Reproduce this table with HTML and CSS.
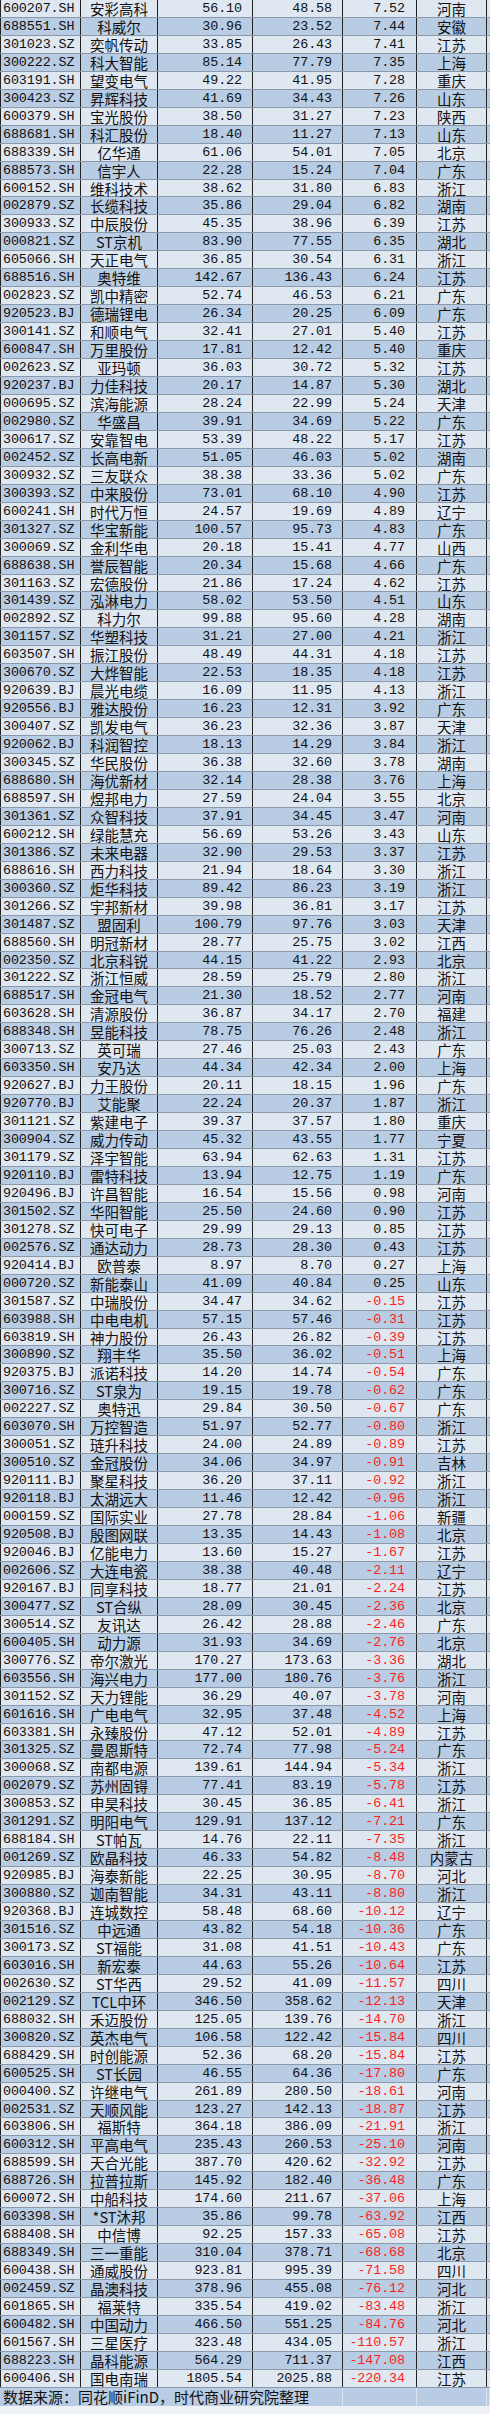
FILE: index.html
```html
<!DOCTYPE html>
<html lang="zh-CN">
<head>
<meta charset="utf-8">
<title>电力设备市值变化</title>
<link rel="stylesheet" href="styles.css">
</head>
<body>
<div class="sheet">
<div class="r"><span>600207.SH</span><span>安彩高科</span><span>56.10</span><span>48.58</span><span>7.52</span><span>河南</span></div>
<div class="r"><span>688551.SH</span><span>科威尔</span><span>30.96</span><span>23.52</span><span>7.44</span><span>安徽</span></div>
<div class="r"><span>301023.SZ</span><span>奕帆传动</span><span>33.85</span><span>26.43</span><span>7.41</span><span>江苏</span></div>
<div class="r"><span>300222.SZ</span><span>科大智能</span><span>85.14</span><span>77.79</span><span>7.35</span><span>上海</span></div>
<div class="r"><span>603191.SH</span><span>望变电气</span><span>49.22</span><span>41.95</span><span>7.28</span><span>重庆</span></div>
<div class="r"><span>300423.SZ</span><span>昇辉科技</span><span>41.69</span><span>34.43</span><span>7.26</span><span>山东</span></div>
<div class="r"><span>600379.SH</span><span>宝光股份</span><span>38.50</span><span>31.27</span><span>7.23</span><span>陕西</span></div>
<div class="r"><span>688681.SH</span><span>科汇股份</span><span>18.40</span><span>11.27</span><span>7.13</span><span>山东</span></div>
<div class="r"><span>688339.SH</span><span>亿华通</span><span>61.06</span><span>54.01</span><span>7.05</span><span>北京</span></div>
<div class="r"><span>688573.SH</span><span>信宇人</span><span>22.28</span><span>15.24</span><span>7.04</span><span>广东</span></div>
<div class="r"><span>600152.SH</span><span>维科技术</span><span>38.62</span><span>31.80</span><span>6.83</span><span>浙江</span></div>
<div class="r"><span>002879.SZ</span><span>长缆科技</span><span>35.86</span><span>29.04</span><span>6.82</span><span>湖南</span></div>
<div class="r"><span>300933.SZ</span><span>中辰股份</span><span>45.35</span><span>38.96</span><span>6.39</span><span>江苏</span></div>
<div class="r"><span>000821.SZ</span><span>ST京机</span><span>83.90</span><span>77.55</span><span>6.35</span><span>湖北</span></div>
<div class="r"><span>605066.SH</span><span>天正电气</span><span>36.85</span><span>30.54</span><span>6.31</span><span>浙江</span></div>
<div class="r"><span>688516.SH</span><span>奥特维</span><span>142.67</span><span>136.43</span><span>6.24</span><span>江苏</span></div>
<div class="r"><span>002823.SZ</span><span>凯中精密</span><span>52.74</span><span>46.53</span><span>6.21</span><span>广东</span></div>
<div class="r"><span>920523.BJ</span><span>德瑞锂电</span><span>26.34</span><span>20.25</span><span>6.09</span><span>广东</span></div>
<div class="r"><span>300141.SZ</span><span>和顺电气</span><span>32.41</span><span>27.01</span><span>5.40</span><span>江苏</span></div>
<div class="r"><span>600847.SH</span><span>万里股份</span><span>17.81</span><span>12.42</span><span>5.40</span><span>重庆</span></div>
<div class="r"><span>002623.SZ</span><span>亚玛顿</span><span>36.03</span><span>30.72</span><span>5.32</span><span>江苏</span></div>
<div class="r"><span>920237.BJ</span><span>力佳科技</span><span>20.17</span><span>14.87</span><span>5.30</span><span>湖北</span></div>
<div class="r"><span>000695.SZ</span><span>滨海能源</span><span>28.24</span><span>22.99</span><span>5.24</span><span>天津</span></div>
<div class="r"><span>002980.SZ</span><span>华盛昌</span><span>39.91</span><span>34.69</span><span>5.22</span><span>广东</span></div>
<div class="r"><span>300617.SZ</span><span>安靠智电</span><span>53.39</span><span>48.22</span><span>5.17</span><span>江苏</span></div>
<div class="r"><span>002452.SZ</span><span>长高电新</span><span>51.05</span><span>46.03</span><span>5.02</span><span>湖南</span></div>
<div class="r"><span>300932.SZ</span><span>三友联众</span><span>38.38</span><span>33.36</span><span>5.02</span><span>广东</span></div>
<div class="r"><span>300393.SZ</span><span>中来股份</span><span>73.01</span><span>68.10</span><span>4.90</span><span>江苏</span></div>
<div class="r"><span>600241.SH</span><span>时代万恒</span><span>24.57</span><span>19.69</span><span>4.89</span><span>辽宁</span></div>
<div class="r"><span>301327.SZ</span><span>华宝新能</span><span>100.57</span><span>95.73</span><span>4.83</span><span>广东</span></div>
<div class="r"><span>300069.SZ</span><span>金利华电</span><span>20.18</span><span>15.41</span><span>4.77</span><span>山西</span></div>
<div class="r"><span>688638.SH</span><span>誉辰智能</span><span>20.34</span><span>15.68</span><span>4.66</span><span>广东</span></div>
<div class="r"><span>301163.SZ</span><span>宏德股份</span><span>21.86</span><span>17.24</span><span>4.62</span><span>江苏</span></div>
<div class="r"><span>301439.SZ</span><span>泓淋电力</span><span>58.02</span><span>53.50</span><span>4.51</span><span>山东</span></div>
<div class="r"><span>002892.SZ</span><span>科力尔</span><span>99.88</span><span>95.60</span><span>4.28</span><span>湖南</span></div>
<div class="r"><span>301157.SZ</span><span>华塑科技</span><span>31.21</span><span>27.00</span><span>4.21</span><span>浙江</span></div>
<div class="r"><span>603507.SH</span><span>振江股份</span><span>48.49</span><span>44.31</span><span>4.18</span><span>江苏</span></div>
<div class="r"><span>300670.SZ</span><span>大烨智能</span><span>22.53</span><span>18.35</span><span>4.18</span><span>江苏</span></div>
<div class="r"><span>920639.BJ</span><span>晨光电缆</span><span>16.09</span><span>11.95</span><span>4.13</span><span>浙江</span></div>
<div class="r"><span>920556.BJ</span><span>雅达股份</span><span>16.23</span><span>12.31</span><span>3.92</span><span>广东</span></div>
<div class="r"><span>300407.SZ</span><span>凯发电气</span><span>36.23</span><span>32.36</span><span>3.87</span><span>天津</span></div>
<div class="r"><span>920062.BJ</span><span>科润智控</span><span>18.13</span><span>14.29</span><span>3.84</span><span>浙江</span></div>
<div class="r"><span>300345.SZ</span><span>华民股份</span><span>36.38</span><span>32.60</span><span>3.78</span><span>湖南</span></div>
<div class="r"><span>688680.SH</span><span>海优新材</span><span>32.14</span><span>28.38</span><span>3.76</span><span>上海</span></div>
<div class="r"><span>688597.SH</span><span>煜邦电力</span><span>27.59</span><span>24.04</span><span>3.55</span><span>北京</span></div>
<div class="r"><span>301361.SZ</span><span>众智科技</span><span>37.91</span><span>34.45</span><span>3.47</span><span>河南</span></div>
<div class="r"><span>600212.SH</span><span>绿能慧充</span><span>56.69</span><span>53.26</span><span>3.43</span><span>山东</span></div>
<div class="r"><span>301386.SZ</span><span>未来电器</span><span>32.90</span><span>29.53</span><span>3.37</span><span>江苏</span></div>
<div class="r"><span>688616.SH</span><span>西力科技</span><span>21.94</span><span>18.64</span><span>3.30</span><span>浙江</span></div>
<div class="r"><span>300360.SZ</span><span>炬华科技</span><span>89.42</span><span>86.23</span><span>3.19</span><span>浙江</span></div>
<div class="r"><span>301266.SZ</span><span>宇邦新材</span><span>39.98</span><span>36.81</span><span>3.17</span><span>江苏</span></div>
<div class="r"><span>301487.SZ</span><span>盟固利</span><span>100.79</span><span>97.76</span><span>3.03</span><span>天津</span></div>
<div class="r"><span>688560.SH</span><span>明冠新材</span><span>28.77</span><span>25.75</span><span>3.02</span><span>江西</span></div>
<div class="r"><span>002350.SZ</span><span>北京科锐</span><span>44.15</span><span>41.22</span><span>2.93</span><span>北京</span></div>
<div class="r"><span>301222.SZ</span><span>浙江恒威</span><span>28.59</span><span>25.79</span><span>2.80</span><span>浙江</span></div>
<div class="r"><span>688517.SH</span><span>金冠电气</span><span>21.30</span><span>18.52</span><span>2.77</span><span>河南</span></div>
<div class="r"><span>603628.SH</span><span>清源股份</span><span>36.87</span><span>34.17</span><span>2.70</span><span>福建</span></div>
<div class="r"><span>688348.SH</span><span>昱能科技</span><span>78.75</span><span>76.26</span><span>2.48</span><span>浙江</span></div>
<div class="r"><span>300713.SZ</span><span>英可瑞</span><span>27.46</span><span>25.03</span><span>2.43</span><span>广东</span></div>
<div class="r"><span>603350.SH</span><span>安乃达</span><span>44.34</span><span>42.34</span><span>2.00</span><span>上海</span></div>
<div class="r"><span>920627.BJ</span><span>力王股份</span><span>20.11</span><span>18.15</span><span>1.96</span><span>广东</span></div>
<div class="r"><span>920770.BJ</span><span>艾能聚</span><span>22.24</span><span>20.37</span><span>1.87</span><span>浙江</span></div>
<div class="r"><span>301121.SZ</span><span>紫建电子</span><span>39.37</span><span>37.57</span><span>1.80</span><span>重庆</span></div>
<div class="r"><span>300904.SZ</span><span>威力传动</span><span>45.32</span><span>43.55</span><span>1.77</span><span>宁夏</span></div>
<div class="r"><span>301179.SZ</span><span>泽宇智能</span><span>63.94</span><span>62.63</span><span>1.31</span><span>江苏</span></div>
<div class="r"><span>920110.BJ</span><span>雷特科技</span><span>13.94</span><span>12.75</span><span>1.19</span><span>广东</span></div>
<div class="r"><span>920496.BJ</span><span>许昌智能</span><span>16.54</span><span>15.56</span><span>0.98</span><span>河南</span></div>
<div class="r"><span>301502.SZ</span><span>华阳智能</span><span>25.50</span><span>24.60</span><span>0.90</span><span>江苏</span></div>
<div class="r"><span>301278.SZ</span><span>快可电子</span><span>29.99</span><span>29.13</span><span>0.85</span><span>江苏</span></div>
<div class="r"><span>002576.SZ</span><span>通达动力</span><span>28.73</span><span>28.30</span><span>0.43</span><span>江苏</span></div>
<div class="r"><span>920414.BJ</span><span>欧普泰</span><span>8.97</span><span>8.70</span><span>0.27</span><span>上海</span></div>
<div class="r"><span>000720.SZ</span><span>新能泰山</span><span>41.09</span><span>40.84</span><span>0.25</span><span>山东</span></div>
<div class="r n"><span>301587.SZ</span><span>中瑞股份</span><span>34.47</span><span>34.62</span><span>-0.15</span><span>江苏</span></div>
<div class="r n"><span>603988.SH</span><span>中电电机</span><span>57.15</span><span>57.46</span><span>-0.31</span><span>江苏</span></div>
<div class="r n"><span>603819.SH</span><span>神力股份</span><span>26.43</span><span>26.82</span><span>-0.39</span><span>江苏</span></div>
<div class="r n"><span>300890.SZ</span><span>翔丰华</span><span>35.50</span><span>36.02</span><span>-0.51</span><span>上海</span></div>
<div class="r n"><span>920375.BJ</span><span>派诺科技</span><span>14.20</span><span>14.74</span><span>-0.54</span><span>广东</span></div>
<div class="r n"><span>300716.SZ</span><span>ST泉为</span><span>19.15</span><span>19.78</span><span>-0.62</span><span>广东</span></div>
<div class="r n"><span>002227.SZ</span><span>奥特迅</span><span>29.84</span><span>30.50</span><span>-0.67</span><span>广东</span></div>
<div class="r n"><span>603070.SH</span><span>万控智造</span><span>51.97</span><span>52.77</span><span>-0.80</span><span>浙江</span></div>
<div class="r n"><span>300051.SZ</span><span>琏升科技</span><span>24.00</span><span>24.89</span><span>-0.89</span><span>江苏</span></div>
<div class="r n"><span>300510.SZ</span><span>金冠股份</span><span>34.06</span><span>34.97</span><span>-0.91</span><span>吉林</span></div>
<div class="r n"><span>920111.BJ</span><span>聚星科技</span><span>36.20</span><span>37.11</span><span>-0.92</span><span>浙江</span></div>
<div class="r n"><span>920118.BJ</span><span>太湖远大</span><span>11.46</span><span>12.42</span><span>-0.96</span><span>浙江</span></div>
<div class="r n"><span>000159.SZ</span><span>国际实业</span><span>27.78</span><span>28.84</span><span>-1.06</span><span>新疆</span></div>
<div class="r n"><span>920508.BJ</span><span>殷图网联</span><span>13.35</span><span>14.43</span><span>-1.08</span><span>北京</span></div>
<div class="r n"><span>920046.BJ</span><span>亿能电力</span><span>13.60</span><span>15.27</span><span>-1.67</span><span>江苏</span></div>
<div class="r n"><span>002606.SZ</span><span>大连电瓷</span><span>38.38</span><span>40.48</span><span>-2.11</span><span>辽宁</span></div>
<div class="r n"><span>920167.BJ</span><span>同享科技</span><span>18.77</span><span>21.01</span><span>-2.24</span><span>江苏</span></div>
<div class="r n"><span>300477.SZ</span><span>ST合纵</span><span>28.09</span><span>30.45</span><span>-2.36</span><span>北京</span></div>
<div class="r n"><span>300514.SZ</span><span>友讯达</span><span>26.42</span><span>28.88</span><span>-2.46</span><span>广东</span></div>
<div class="r n"><span>600405.SH</span><span>动力源</span><span>31.93</span><span>34.69</span><span>-2.76</span><span>北京</span></div>
<div class="r n"><span>300776.SZ</span><span>帝尔激光</span><span>170.27</span><span>173.63</span><span>-3.36</span><span>湖北</span></div>
<div class="r n"><span>603556.SH</span><span>海兴电力</span><span>177.00</span><span>180.76</span><span>-3.76</span><span>浙江</span></div>
<div class="r n"><span>301152.SZ</span><span>天力锂能</span><span>36.29</span><span>40.07</span><span>-3.78</span><span>河南</span></div>
<div class="r n"><span>601616.SH</span><span>广电电气</span><span>32.95</span><span>37.48</span><span>-4.52</span><span>上海</span></div>
<div class="r n"><span>603381.SH</span><span>永臻股份</span><span>47.12</span><span>52.01</span><span>-4.89</span><span>江苏</span></div>
<div class="r n"><span>301325.SZ</span><span>曼恩斯特</span><span>72.74</span><span>77.98</span><span>-5.24</span><span>广东</span></div>
<div class="r n"><span>300068.SZ</span><span>南都电源</span><span>139.61</span><span>144.94</span><span>-5.34</span><span>浙江</span></div>
<div class="r n"><span>002079.SZ</span><span>苏州固锝</span><span>77.41</span><span>83.19</span><span>-5.78</span><span>江苏</span></div>
<div class="r n"><span>300853.SZ</span><span>申昊科技</span><span>30.45</span><span>36.85</span><span>-6.41</span><span>浙江</span></div>
<div class="r n"><span>301291.SZ</span><span>明阳电气</span><span>129.91</span><span>137.12</span><span>-7.21</span><span>广东</span></div>
<div class="r n"><span>688184.SH</span><span>ST帕瓦</span><span>14.76</span><span>22.11</span><span>-7.35</span><span>浙江</span></div>
<div class="r n"><span>001269.SZ</span><span>欧晶科技</span><span>46.33</span><span>54.82</span><span>-8.48</span><span>内蒙古</span></div>
<div class="r n"><span>920985.BJ</span><span>海泰新能</span><span>22.25</span><span>30.95</span><span>-8.70</span><span>河北</span></div>
<div class="r n"><span>300880.SZ</span><span>迦南智能</span><span>34.31</span><span>43.11</span><span>-8.80</span><span>浙江</span></div>
<div class="r n"><span>920368.BJ</span><span>连城数控</span><span>58.48</span><span>68.60</span><span>-10.12</span><span>辽宁</span></div>
<div class="r n"><span>301516.SZ</span><span>中远通</span><span>43.82</span><span>54.18</span><span>-10.36</span><span>广东</span></div>
<div class="r n"><span>300173.SZ</span><span>ST福能</span><span>31.08</span><span>41.51</span><span>-10.43</span><span>广东</span></div>
<div class="r n"><span>603016.SH</span><span>新宏泰</span><span>44.63</span><span>55.26</span><span>-10.64</span><span>江苏</span></div>
<div class="r n"><span>002630.SZ</span><span>ST华西</span><span>29.52</span><span>41.09</span><span>-11.57</span><span>四川</span></div>
<div class="r n"><span>002129.SZ</span><span>TCL中环</span><span>346.50</span><span>358.62</span><span>-12.13</span><span>天津</span></div>
<div class="r n"><span>688032.SH</span><span>禾迈股份</span><span>125.05</span><span>139.76</span><span>-14.70</span><span>浙江</span></div>
<div class="r n"><span>300820.SZ</span><span>英杰电气</span><span>106.58</span><span>122.42</span><span>-15.84</span><span>四川</span></div>
<div class="r n"><span>688429.SH</span><span>时创能源</span><span>52.36</span><span>68.20</span><span>-15.84</span><span>江苏</span></div>
<div class="r n"><span>600525.SH</span><span>ST长园</span><span>46.55</span><span>64.36</span><span>-17.80</span><span>广东</span></div>
<div class="r n"><span>000400.SZ</span><span>许继电气</span><span>261.89</span><span>280.50</span><span>-18.61</span><span>河南</span></div>
<div class="r n"><span>002531.SZ</span><span>天顺风能</span><span>123.27</span><span>142.13</span><span>-18.87</span><span>江苏</span></div>
<div class="r n"><span>603806.SH</span><span>福斯特</span><span>364.18</span><span>386.09</span><span>-21.91</span><span>浙江</span></div>
<div class="r n"><span>600312.SH</span><span>平高电气</span><span>235.43</span><span>260.53</span><span>-25.10</span><span>河南</span></div>
<div class="r n"><span>688599.SH</span><span>天合光能</span><span>387.70</span><span>420.62</span><span>-32.92</span><span>江苏</span></div>
<div class="r n"><span>688726.SH</span><span>拉普拉斯</span><span>145.92</span><span>182.40</span><span>-36.48</span><span>广东</span></div>
<div class="r n"><span>600072.SH</span><span>中船科技</span><span>174.60</span><span>211.67</span><span>-37.06</span><span>上海</span></div>
<div class="r n"><span>603398.SH</span><span>*ST沐邦</span><span>35.86</span><span>99.78</span><span>-63.92</span><span>江西</span></div>
<div class="r n"><span>688408.SH</span><span>中信博</span><span>92.25</span><span>157.33</span><span>-65.08</span><span>江苏</span></div>
<div class="r n"><span>688349.SH</span><span>三一重能</span><span>310.04</span><span>378.71</span><span>-68.68</span><span>北京</span></div>
<div class="r n"><span>600438.SH</span><span>通威股份</span><span>923.81</span><span>995.39</span><span>-71.58</span><span>四川</span></div>
<div class="r n"><span>002459.SZ</span><span>晶澳科技</span><span>378.96</span><span>455.08</span><span>-76.12</span><span>河北</span></div>
<div class="r n"><span>601865.SH</span><span>福莱特</span><span>335.54</span><span>419.02</span><span>-83.48</span><span>浙江</span></div>
<div class="r n"><span>600482.SH</span><span>中国动力</span><span>466.50</span><span>551.25</span><span>-84.76</span><span>河北</span></div>
<div class="r n"><span>601567.SH</span><span>三星医疗</span><span>323.48</span><span>434.05</span><span>-110.57</span><span>浙江</span></div>
<div class="r n"><span>688223.SH</span><span>晶科能源</span><span>564.29</span><span>711.37</span><span>-147.08</span><span>江西</span></div>
<div class="r n"><span>600406.SH</span><span>国电南瑞</span><span>1805.54</span><span>2025.88</span><span>-220.34</span><span>江苏</span></div>
</div>
<div class="foot"><span class="src">数据来源：同花顺iFinD，时代商业研究院整理</span><span></span><span></span><span></span></div>
</body>
</html>
```
FILE: styles.css
```css
html, body {
  margin: 0;
  padding: 0;
}
body {
  width: 490px;
  background: #eef1f5;
  color: #111;
}
.sheet {
  display: flex;
  flex-direction: column;
}
.r {
  display: grid;
  grid-template-columns: 81px 77px 95px 90px 74px 70px 3px;
  height: 17.96px;
  box-sizing: border-box;
  border-bottom: 1px solid #8c99ab;
  background: #dfe7f1;
}
.r:nth-child(even) {
  background: #b8cce4;
}
.r > span {
  display: block;
  box-sizing: border-box;
  border-right: 1px solid #222;
  padding-top: 1px;
  line-height: 15px;
  white-space: nowrap;
}
.r > span:nth-child(1) {
  border-left: 1px solid #222;
  padding-left: 2px;
  font-family: "Liberation Mono", monospace;
  font-size: 13.4px;
  letter-spacing: -0.1px;
}
.r > span:nth-child(2),
.r > span:nth-child(6) {
  text-align: center;
  font-family: "Noto Sans CJK SC", sans-serif;
  font-size: 14.5px;
}
.r > span:nth-child(3),
.r > span:nth-child(4),
.r > span:nth-child(5) {
  text-align: right;
  padding-right: 10px;
  font-family: "Liberation Mono", monospace;
  font-size: 13.4px;
  letter-spacing: -0.1px;
}
.r > span:nth-child(5) {
  padding-right: 11px;
}
.r.n > span:nth-child(5) {
  color: #ff1c1c;
}
.foot {
  display: grid;
  grid-template-columns: 343px 74px 70px 3px;
  height: 18px;
  background: #b8cce4;
}
.foot > span {
  display: block;
  border-right: 1px solid #dbe4ef;
}
.foot .src {
  padding-left: 3px;
  font-family: "Noto Sans CJK SC", sans-serif;
  font-size: 15px;
  line-height: 17px;
  white-space: nowrap;
  color: #111;
}
```
